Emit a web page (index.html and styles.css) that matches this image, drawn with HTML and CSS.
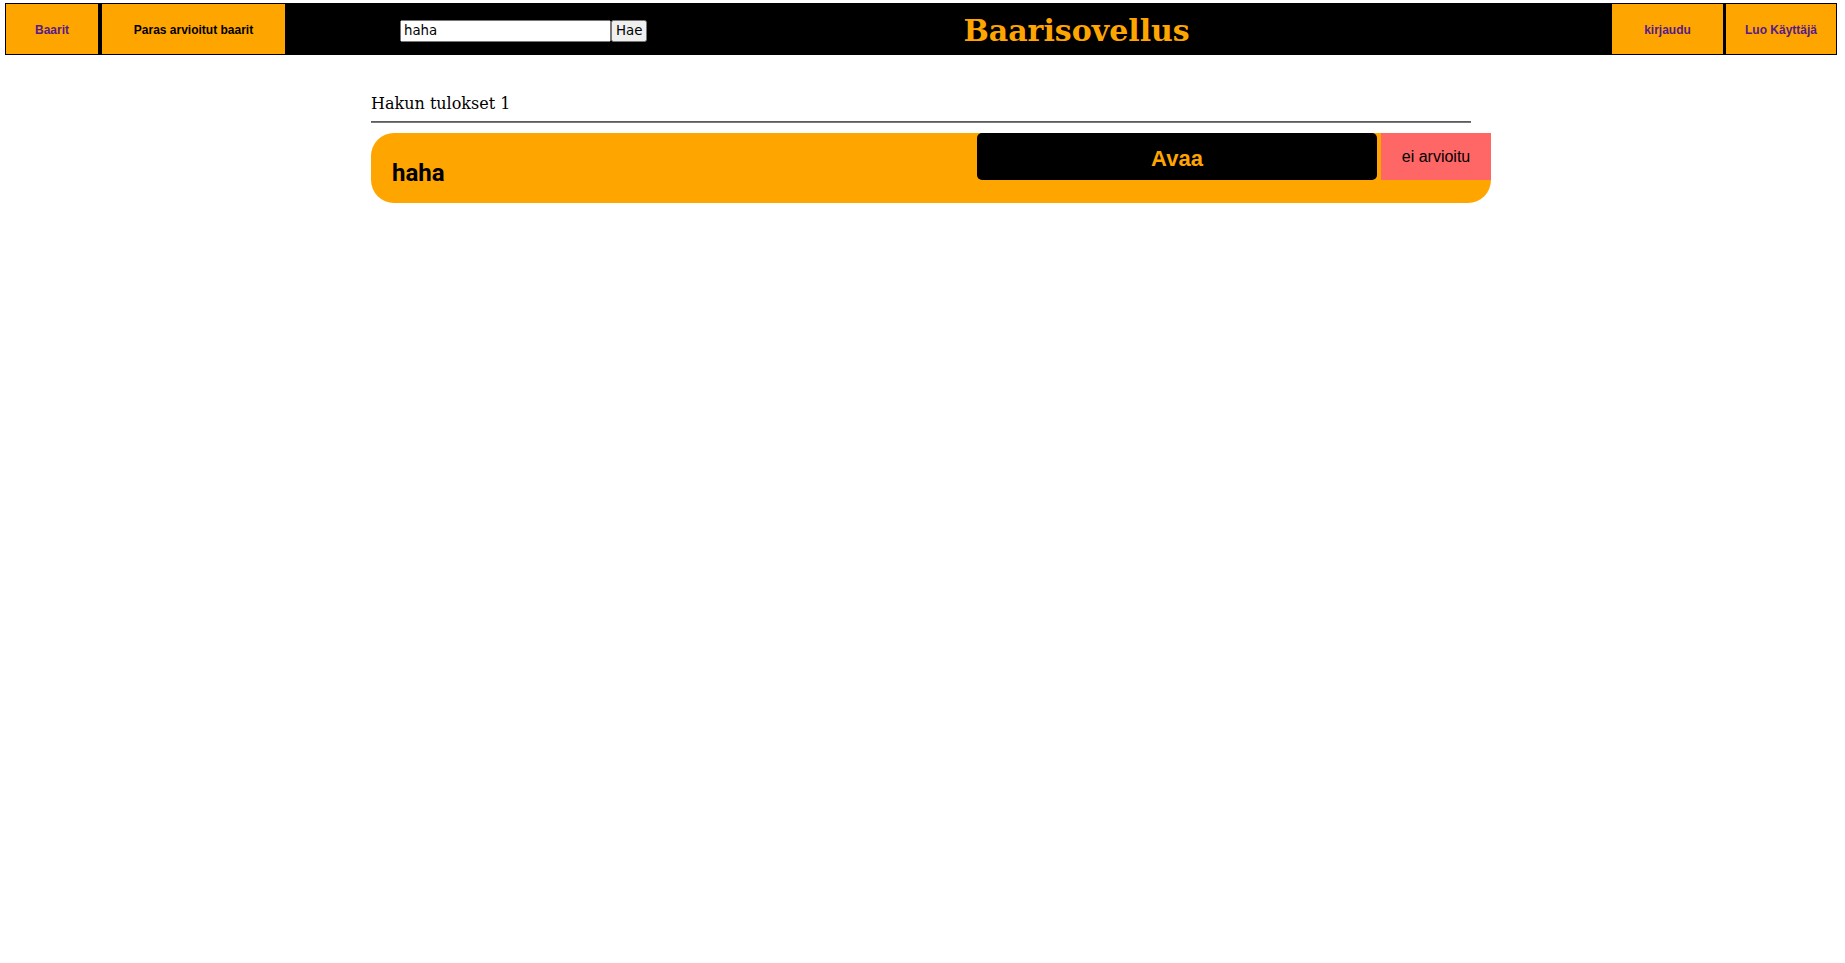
FILE: index.html
```html
<!DOCTYPE html>
<html lang="fi">
<head>
<meta charset="utf-8">
<title>Baarisovellus</title>
<link rel="stylesheet" href="styles.css">
</head>
<body>
<header class="topbar">
  <nav class="nav-left">
    <a class="nav-btn btn-baarit visited" href="#">Baarit</a>
    <a class="nav-btn btn-paras" href="#">Paras arvioitut baarit</a>
  </nav>
  <form class="search" onsubmit="return false">
    <input class="search-input" type="text" value="haha"><button class="search-btn" type="submit">Hae</button>
  </form>
  <div class="title">Baarisovellus</div>
  <nav class="nav-right">
    <a class="nav-btn btn-login visited" href="#">kirjaudu</a>
    <a class="nav-btn btn-create visited" href="#">Luo Käyttäjä</a>
  </nav>
</header>
<main class="main">
  <div class="results-title">Hakun tulokset 1</div>
  <hr class="divider">
  <div class="card">
    <div class="card-name">haha</div>
    <a class="open-btn" href="#">Avaa</a>
    <div class="rating">ei arvioitu</div>
  </div>
</main>
</body>
</html>
```
FILE: styles.css
```css
html, body {
  margin: 0;
  padding: 0;
  background: #ffffff;
}

body {
  font-family: "DejaVu Serif", serif;
}

.topbar {
  margin: 3px 8px 0 5px;
  height: 50px;
  border: 1px solid #000;
  background: #000;
  display: flex;
  align-items: stretch;
}

.nav-left,
.nav-right {
  display: flex;
  align-items: stretch;
}

.nav-right {
  margin-left: auto;
}

.nav-btn {
  background: #ffa500;
  display: flex;
  align-items: center;
  justify-content: center;
  padding-top: 1px;
  font-family: "Liberation Sans", Arial, sans-serif;
  font-weight: bold;
  font-size: 12px;
  text-decoration: none;
  color: #000;
}

.nav-btn.visited {
  color: #551a8b;
}

.btn-baarit {
  width: 92px;
}

.btn-paras {
  width: 183px;
  margin-left: 4px;
}

.btn-login {
  width: 111px;
}

.btn-create {
  width: 110px;
  margin-left: 3px;
}

.search {
  margin: 0 0 0 115px;
  display: flex;
  align-items: center;
  padding-top: 3px;
}

.search-input {
  box-sizing: border-box;
  width: 211px;
  height: 22px;
  margin: 0;
  font-family: "DejaVu Sans", sans-serif;
  font-size: 13.33px;
}

.search-btn {
  box-sizing: border-box;
  height: 22px;
  margin: 0;
  padding: 1px 3px;
  font-family: "DejaVu Sans", sans-serif;
  font-size: 13.33px;
}

.title {
  margin-left: 316px;
  padding-top: 2px;
  display: flex;
  align-items: center;
  color: #ffa500;
  font-family: "DejaVu Serif", serif;
  font-weight: bold;
  font-size: 30px;
}

.main {
  width: 1100px;
  margin: 39px 0 0 371px;
}

.results-title {
  font-family: "DejaVu Serif", serif;
  font-size: 16px;
  color: #000;
}

.divider {
  margin: 8px 0 0 0;
  border: none;
  border-top: 1px solid #5c5c5c;
  border-bottom: 1px solid #7a7a7a;
  height: 0;
}

.card {
  margin-top: 10px;
  width: 1120px;
  height: 70px;
  background: #ffa500;
  border-radius: 23px;
  display: flex;
  align-items: flex-start;
}

.card-name {
  flex: 1;
  padding-left: 21px;
  margin-top: 26px;
  font-family: Roboto, "Liberation Sans", sans-serif;
  font-weight: bold;
  font-size: 24px;
  line-height: 28px;
  color: #000;
}

.open-btn {
  box-sizing: border-box;
  width: 400px;
  height: 47px;
  padding-top: 4px;
  line-height: 43px;
  background: #000;
  border-radius: 5px;
  text-align: center;
  color: #ffa500;
  font-family: "Liberation Sans", Arial, sans-serif;
  font-weight: bold;
  font-size: 22px;
  text-decoration: none;
  margin-right: 4px;
}

.rating {
  width: 110px;
  height: 47px;
  background: #ff6666;
  display: flex;
  align-items: center;
  justify-content: center;
  font-family: "Liberation Sans", Arial, sans-serif;
  font-size: 16px;
  color: #000;
}
```
